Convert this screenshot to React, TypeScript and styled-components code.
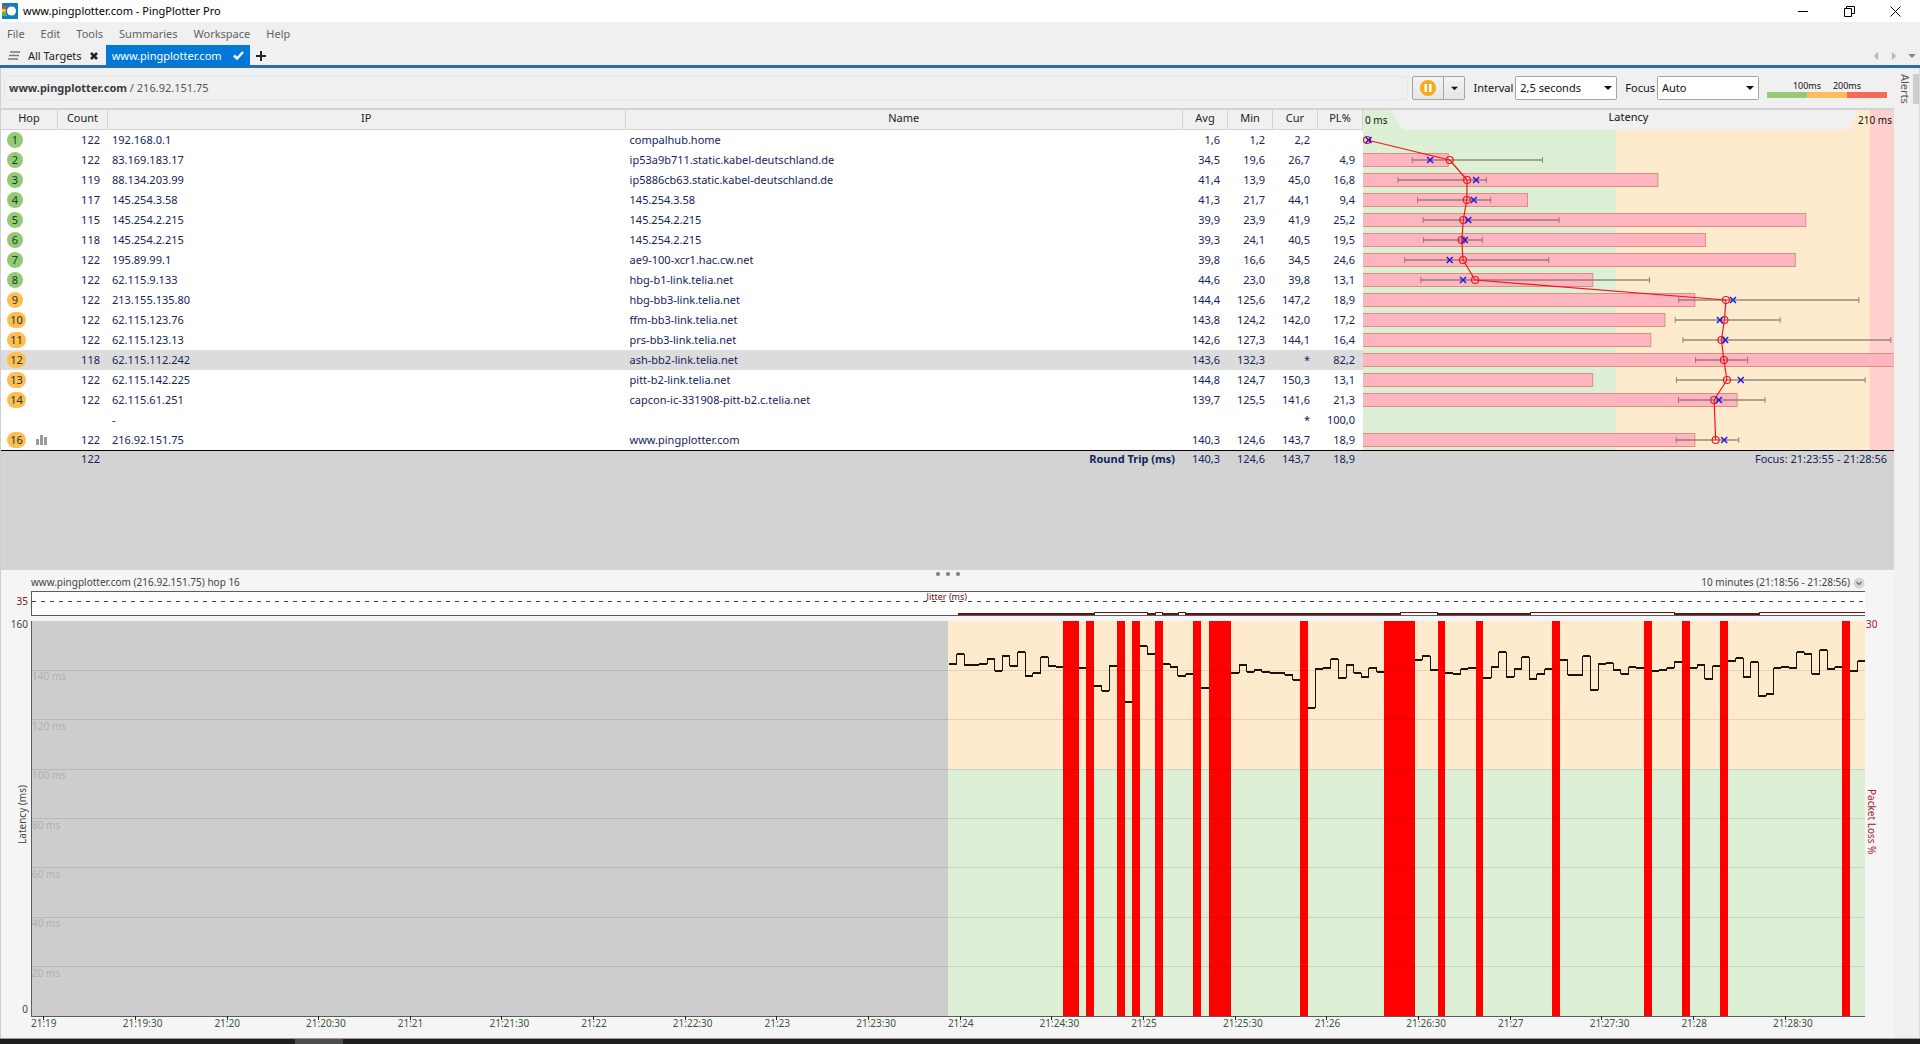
import React from "react";
import styled, { createGlobalStyle } from "styled-components";

const FONT = '"Noto Sans", "Open Sans", sans-serif';
const NAVY = "#14245c";

const Global = createGlobalStyle`
  *, *::before, *::after { box-sizing: border-box; }
  body { margin: 0; font: 11px/16px ${FONT}; color: #111; background: #f0f0f0; }
  button, select, input { font: inherit; color: inherit; }
  button { border: 0; padding: 0; background: none; }
`;

/* ---------- data ---------- */

type Hop = {
  n?: number;
  count?: number;
  ip: string;
  name?: string;
  avg?: string;
  min?: string;
  cur?: string;
  pl?: string;
  max?: number;
  final?: boolean;
};

const hops: Hop[] = [
  { n: 1, count: 122, ip: "192.168.0.1", name: "compalhub.home", avg: "1,6", min: "1,2", cur: "2,2", max: 3 },
  { n: 2, count: 122, ip: "83.169.183.17", name: "ip53a9b711.static.kabel-deutschland.de", avg: "34,5", min: "19,6", cur: "26,7", pl: "4,9", max: 71.4 },
  { n: 3, count: 119, ip: "88.134.203.99", name: "ip5886cb63.static.kabel-deutschland.de", avg: "41,4", min: "13,9", cur: "45,0", pl: "16,8", max: 49.1 },
  { n: 4, count: 117, ip: "145.254.3.58", name: "145.254.3.58", avg: "41,3", min: "21,7", cur: "44,1", pl: "9,4", max: 50.8 },
  { n: 5, count: 115, ip: "145.254.2.215", name: "145.254.2.215", avg: "39,9", min: "23,9", cur: "41,9", pl: "25,2", max: 78 },
  { n: 6, count: 118, ip: "145.254.2.215", name: "145.254.2.215", avg: "39,3", min: "24,1", cur: "40,5", pl: "19,5", max: 47.5 },
  { n: 7, count: 122, ip: "195.89.99.1", name: "ae9-100-xcr1.hac.cw.net", avg: "39,8", min: "16,6", cur: "34,5", pl: "24,6", max: 73.9 },
  { n: 8, count: 122, ip: "62.115.9.133", name: "hbg-b1-link.telia.net", avg: "44,6", min: "23,0", cur: "39,8", pl: "13,1", max: 114 },
  { n: 9, count: 122, ip: "213.155.135.80", name: "hbg-bb3-link.telia.net", avg: "144,4", min: "125,6", cur: "147,2", pl: "18,9", max: 197.3 },
  { n: 10, count: 122, ip: "62.115.123.76", name: "ffm-bb3-link.telia.net", avg: "143,8", min: "124,2", cur: "142,0", pl: "17,2", max: 166 },
  { n: 11, count: 122, ip: "62.115.123.13", name: "prs-bb3-link.telia.net", avg: "142,6", min: "127,3", cur: "144,1", pl: "16,4", max: 210 },
  { n: 12, count: 118, ip: "62.115.112.242", name: "ash-bb2-link.telia.net", avg: "143,6", min: "132,3", cur: "*", pl: "82,2", max: 153 },
  { n: 13, count: 122, ip: "62.115.142.225", name: "pitt-b2-link.telia.net", avg: "144,8", min: "124,7", cur: "150,3", pl: "13,1", max: 199.8 },
  { n: 14, count: 122, ip: "62.115.61.251", name: "capcon-ic-331908-pitt-b2.c.telia.net", avg: "139,7", min: "125,5", cur: "141,6", pl: "21,3", max: 160 },
  { ip: "-", cur: "*", pl: "100,0" },
  { n: 16, count: 122, ip: "216.92.151.75", name: "www.pingplotter.com", avg: "140,3", min: "124,6", cur: "143,7", pl: "18,9", max: 149.5, final: true },
];

// One sample every 2.5 s; null is a lost packet.
const samples: (number | null)[] = [
  142.6, 146.6, 142.2, 142.2, 142.6, 144.6, 139.8, 145.8, 141.8, 147.4,
  137.7, 138.9, 145.4, 141.8, 141.4, null, null, 141, null, 133.7,
  131.7, 141.8, null, 127.2, null, 149.7, 146.6, null, 142.6, 141.4,
  137.7, 138.5, null, 132.9, null, null, null, 138.9, 142.2, 139.4,
  140.2, 139.4, 138.9, 138.9, 138.1, 136.1, null, 124.8, 140.6, 141,
  144.6, 136.9, 142.2, 138.9, 137.3, 141, 139.4, null, null, null,
  null, 144.2, 145.8, 140.2, null, 138.9, 138.5, 140.6, 141, null,
  136.9, 141.4, 147.4, 137.3, 140.6, 145.4, 136.5, 138.5, 140.6, null,
  144.2, 138.1, 138.1, 145.8, 132.1, 142.6, 143, 140.2, 138.5, 141.4,
  141, null, 139.8, 140.2, 141, 143.4, null, 141, 142.2, 136.5,
  141.9, null, 143.8, 145.2, 137.3, 143.4, 129.5, 130.4, 141, 141.4,
  141, 147.4, 146.8, 138.5, 148.3, 140.6, 141.4, null, 139.8, 143.8,
];

// Stretches of the jitter trace, in percent of the time line.
const jitter: [number, number, boolean][] = [
  [50.5, 57.95, false],
  [57.95, 60.85, true],
  [60.85, 61.3, false],
  [61.3, 61.7, true],
  [61.7, 62.55, false],
  [62.55, 62.95, true],
  [62.95, 74.65, false],
  [74.65, 76.7, true],
  [76.7, 81.75, false],
  [81.75, 89.6, true],
  [89.6, 94.25, false],
  [94.25, 100, true],
];

const times = Array.from({ length: 20 }, (_, i) => {
  const minute = 19 + Math.floor(i / 2);
  return `21:${minute}${i % 2 ? ":30" : ""}`;
});

const num = (s?: string) => (s && s !== "*" ? parseFloat(s.replace(",", ".")) : null);
const pct = (v: number) => `${v.toFixed(3)}%`;

/* ---------- window frame ---------- */

const Window = styled.div`
  display: flex;
  flex-direction: column;
  min-height: 100vh;
`;

const TitleBar = styled.header`
  display: flex;
  align-items: center;
  height: 22px;
  padding: 0 2px;
  background: #fff;
  color: #000;
`;

const Title = styled.h1`
  flex: 1;
  margin: 0 0 0 5px;
  font-size: 11px;
  font-weight: 400;
`;

const WindowButton = styled.button`
  display: grid;
  place-items: center;
  width: 46px;
  height: 20px;
`;

const MenuBar = styled.nav`
  display: flex;
  align-items: center;
  gap: 16px;
  height: 23px;
  padding: 0 7px;
  color: #626262;
`;

const TabStrip = styled.div`
  display: flex;
  align-items: stretch;
  height: 23px;
  border-bottom: 2px solid #2a6da6;
  box-shadow: inset 0 -1px #2a6da6;
  padding-right: 4px;
`;

const Tab = styled.button<{ $active?: boolean }>`
  display: flex;
  align-items: center;
  justify-content: space-between;
  gap: 8px;
  min-width: ${(p) => (p.$active ? "144px" : "0")};
  padding: ${(p) => (p.$active ? "0 6px" : "0 8px")};
  color: ${(p) => (p.$active ? "#fff" : "#222")};
  background: ${(p) => (p.$active ? "#0078d7" : "transparent")};
`;

const AddTab = styled.button`
  display: grid;
  place-items: center;
  width: 22px;
`;

const TabNav = styled.div`
  display: flex;
  align-items: center;
  gap: 10px;
  margin-left: auto;
`;

const Body = styled.div`
  display: flex;
  flex: 1;
`;

const Main = styled.main`
  display: flex;
  flex-direction: column;
  flex: 1;
  min-width: 0;
  border-left: 1px solid #cfcfcf;
`;

const AlertsRail = styled.aside`
  display: flex;
  align-items: flex-start;
  justify-content: space-between;
  flex: 0 0 26px;
  padding: 6px 0 0 4px;
  border-right: 1px solid #dcdcdc;
`;

const AlertsTab = styled.button`
  writing-mode: vertical-rl;
  color: #555;
  line-height: 14px;
`;

const RailThumb = styled.div`
  width: 6px;
  height: 30px;
  background: #cdcdcd;
`;

const Taskbar = styled.footer`
  height: 6px;
  border-top: 1px solid #9a9a9a;
  background: #211f1e;
  padding-left: 295px;
`;

const TaskbarItem = styled.div`
  width: 48px;
  height: 5px;
  background: #504e4c;
`;

/* ---------- target bar ---------- */

const TargetBar = styled.section`
  display: flex;
  align-items: center;
  height: 42px;
  padding: 1px 7px 1px 3px;
  border-bottom: 2px solid #d2d2d2;
`;

const TargetName = styled.div`
  flex: 1;
  height: 24px;
  margin-right: 4px;
  padding: 3px 4px;
  border: 1px solid #e3e8ec;
  color: #555;
  strong { color: #3c3c3c; }
`;

const SplitButton = styled.div`
  display: flex;
  height: 24px;
  border: 1px solid #a3a7ab;
  border-radius: 2px;
  background: linear-gradient(#f3f3f3, #e6e6e6);
  margin-right: 8px;
`;

const SplitPart = styled.button<{ $width: number }>`
  display: grid;
  place-items: center;
  width: ${(p) => p.$width}px;
  & + & { border-left: 1px solid #a3a7ab; }
`;

const Field = styled.label`
  display: flex;
  align-items: center;
  gap: 2px;
  margin-right: 8px;
`;

const SelectBox = styled.span`
  display: grid;
  align-items: center;
  width: 102px;
  height: 24px;
  border: 1px solid #a3a7ab;
  border-radius: 2px;
  background: #fff;
  select {
    grid-area: 1 / 1;
    appearance: none;
    height: 22px;
    padding: 0 20px 0 4px;
    border: 0;
    background: none;
    outline: none;
  }
  svg {
    grid-area: 1 / 1;
    justify-self: end;
    margin-right: 4px;
    pointer-events: none;
  }
`;

const Scale = styled.div`
  width: 120px;
`;

const ScaleLabels = styled.div`
  display: grid;
  grid-template-columns: 40px 40px;
  justify-content: center;
  justify-items: center;
  font-size: 9px;
  line-height: 13px;
`;

const ScaleBar = styled.div`
  display: grid;
  grid-template-columns: 1fr 1fr 1fr;
  height: 6px;
`;

const ScalePart = styled.span<{ $color: string }>`
  background: ${(p) => p.$color};
`;

/* ---------- hop table ---------- */

const TracePane = styled.section`
  display: grid;
  grid-template-columns: 1362fr 531fr;
  align-items: start;
  padding-bottom: 99px;
  background: #d3d3d3;
`;

const HopTable = styled.table`
  width: 100%;
  table-layout: fixed;
  border-collapse: separate;
  border-spacing: 0;
  background: #fff;
  color: ${NAVY};
`;

const HeadCell = styled.th`
  height: 20px;
  padding: 0 0 3px;
  border-right: 1px solid #d3d3d3;
  border-bottom: 1px solid #d3d3d3;
  background: #f0f0f0;
  color: #222;
  font-weight: 400;
  line-height: 16px;
`;

const Row = styled.tr<{ $selected?: boolean }>`
  background: ${(p) => (p.$selected ? "#dcdcdc" : "#fff")};
`;

const Cell = styled.td<{ $left?: boolean }>`
  height: 20px;
  padding: ${(p) => (p.$left ? "0 4px" : "0 8px")};
  text-align: ${(p) => (p.$left ? "left" : "right")};
  line-height: 16px;
  white-space: nowrap;
`;

const FootCell = styled(Cell)`
  height: 21px;
  border-top: 1px solid #000;
  background: #d3d3d3;
  padding-bottom: 4px;
`;

const HopCell = styled.div`
  display: flex;
  align-items: center;
  gap: 10px;
  padding-left: 2px;
`;

const Badge = styled.span<{ $color: string; $wide: boolean }>`
  width: ${(p) => (p.$wide ? 19 : 16)}px;
  height: 16px;
  border-radius: 8px;
  background: ${(p) => p.$color};
  color: #23343c;
  text-align: center;
  line-height: 15px;
`;

const LatencyPane = styled.div`
  background: linear-gradient(90deg, #ddefd5 0 47.6%, #feebcd 47.6% 95.4%, #ffd0cd 95.4%);
`;

const LatencyHead = styled.div`
  position: relative;
  display: grid;
  grid-template-columns: 1fr auto 1fr;
  height: 20px;
  padding: 1px 2px 0;
  font-size: 10px;
  line-height: 18px;
  &::before {
    content: "";
    position: absolute;
    inset: 0;
    background: #f0f0f0;
    clip-path: polygon(28px 0, calc(100% - 34px) 0, calc(100% - 47px) 100%, 40px 100%);
  }
  span { position: relative; }
  span:last-child { text-align: right; }
`;

const LatencyTitle = styled.span`
  font-size: 11px;
  line-height: 12px;
`;

const Plot = styled.svg<{ $height?: number }>`
  display: block;
  width: 100%;
  height: ${(p) => (p.$height ? `${p.$height}px` : "100%")};
`;

const FocusRange = styled.div`
  height: 21px;
  border-top: 1px solid #000;
  background: #d3d3d3;
  padding: 0 7px;
  color: ${NAVY};
  text-align: right;
`;

/* ---------- time graph ---------- */

const TimePane = styled.section`
  display: grid;
  grid-template-columns: 30px 1fr 29px;
  grid-template-rows: 21px 25px 5px minmax(200px, 1fr) 21px;
  flex: 1;
  background: #f5f5f5;
  color: #444;
  font-size: 10px;
`;

const GraphHead = styled.div`
  grid-column: 2;
  display: grid;
  grid-template-columns: 1fr auto 1fr;
  padding-top: 2px;
  line-height: 21px;
`;

const Grip = styled.div`
  display: flex;
  gap: 6px;
  i {
    width: 4px;
    height: 4px;
    border-radius: 2px;
    background: #7c7c7c;
  }
`;

const RangePicker = styled.button`
  display: flex;
  align-items: center;
  justify-content: flex-end;
  gap: 3px;
  line-height: 21px;
`;

const JitterBox = styled.div`
  position: relative;
  grid-area: 2 / 2;
  border: solid #5c5c5c;
  border-width: 1px 0 1px 1px;
  background: #fdfdfd;
`;

const JitterTitle = styled.span`
  position: absolute;
  top: 0;
  left: 50%;
  margin-left: -22px;
  color: #6b1218;
  font-size: 9px;
  line-height: 10px;
`;

const LatencyBox = styled.div`
  position: relative;
  grid-area: 4 / 2;
  border-left: 1px solid #5c5c5c;
  border-bottom: 1px solid #5c5c5c;
  background:
    linear-gradient(90deg, #cdcdcd 49.95%, transparent 49.95%),
    linear-gradient(#feebcd 37.5%, #ddefd5 37.5%);
`;

const GridLabel = styled.span`
  position: absolute;
  left: 0;
  color: #b0b0b0;
  line-height: 12px;
`;

const AxisSide = styled.div<{ $right?: boolean; $color?: string; $row: number }>`
  grid-area: ${(p) => p.$row} / ${(p) => (p.$right ? 3 : 1)};
  display: flex;
  flex-direction: column;
  justify-content: space-between;
  align-items: ${(p) => (p.$right ? "flex-start" : "flex-end")};
  padding: ${(p) => (p.$right ? "0 1px" : "0 3px")};
  color: ${(p) => p.$color ?? "inherit"};
`;

const JitterSide = styled(AxisSide)`
  line-height: 21px;
`;

const AxisNumber = styled.span`
  line-height: 6px;
  &:last-child { line-height: 16px; }
`;

const VerticalText = styled.span<{ $flip?: boolean }>`
  writing-mode: vertical-rl;
  transform: ${(p) => (p.$flip ? "rotate(180deg)" : "none")};
  line-height: 12px;
`;

const TimeAxis = styled.div`
  grid-area: 5 / 2;
  display: flex;
  color: #355a35;
  line-height: 13px;
  span { flex: 0 0 5%; white-space: nowrap; }
`;

/* ---------- drawings ---------- */

const Caret = ({ dir = "down", color = "#111", w = 8 }: { dir?: "down" | "left" | "right"; color?: string; w?: number }) => {
  const d = { down: "M0 2h8L4 6z", left: "M6 0v8L2 4z", right: "M2 0v8l4-4z" }[dir];
  return (
    <svg width={w} height={w} viewBox="0 0 8 8" aria-hidden="true">
      <path d={d} fill={color} />
    </svg>
  );
};

const AppIcon = () => (
  <svg width="16" height="16" viewBox="0 0 16 16" aria-hidden="true">
    <rect width="16" height="16" rx="1" fill="#0b7fc4" />
    <path d="M0 3h5v4H0z" fill="#e0473a" />
    <path d="M0 6h5v3H0z" fill="#f7c23c" />
    <path d="M0 9h5v4H0z" fill="#62b246" />
    <circle cx="9.500" cy="8" r="6" fill="#0b7fc4" />
    <circle cx="9.500" cy="8" r="4.600" fill="#fff" />
  </svg>
);

const LatencyGraph = () => {
  // The data scale ends slightly short of the pane's right edge.
  const x = (ms: number) => (ms / 210) * 99.4;
  const points = hops
    .map((h, i) => ({ avg: num(h.avg), y: i * 20 + 10 }))
    .filter((p): p is { avg: number; y: number } => p.avg !== null);
  return (
    <Plot $height={320} role="img" aria-label="Latency per hop">
      {hops.map((h, i) => {
        const y = i * 20 + 10;
        const loss = num(h.pl);
        const min = num(h.min);
        const showBar = loss !== null && h.n;
        return (
          <g key={i}>
            {showBar && (
              <rect x="-1" y={y - 6.5} width={pct(Math.min(110, (loss / 30) * 99.5))} height="13" fill="#ffb5c0" stroke="#d9907f" />
            )}
            {min !== null && h.max && h.max > 5 && (
              <g stroke="#7d7068" strokeOpacity="0.800">
                <line x1={pct(x(min))} x2={pct(x(h.max))} y1={y} y2={y} strokeWidth="1.500" />
                <line x1={pct(x(min))} x2={pct(x(min))} y1={y - 3} y2={y + 3} />
                <line x1={pct(x(h.max))} x2={pct(x(h.max))} y1={y - 3} y2={y + 3} />
              </g>
            )}
          </g>
        );
      })}
      {points.slice(1).map((p, i) => (
        <line key={i} x1={pct(x(points[i].avg))} y1={points[i].y} x2={pct(x(p.avg))} y2={p.y} stroke="#f5141c" strokeWidth="1.200" />
      ))}
      {points.map((p, i) => (
        <circle key={i} cx={pct(x(p.avg))} cy={p.y} r="3.500" fill="none" stroke="#f5141c" strokeWidth="1.200" />
      ))}
      {hops.map((h, i) => {
        const cur = num(h.cur);
        return cur === null ? null : (
          <svg key={i} x={pct(x(cur))} y={i * 20 + 10} overflow="visible">
            <path d="M-3-3 3 3M3-3-3 3" stroke="#1a1ae6" strokeWidth="1.500" />
          </svg>
        );
      })}
    </Plot>
  );
};

const TimeGraph = () => {
  const start = 50.02;
  const step = 2.5 / 6;
  const x = (i: number) => pct(start + i * step);
  const y = (ms: number) => pct(((160 - ms) / 160) * 100);
  return (
    <Plot role="img" aria-label="Latency over time" overflow="visible" shapeRendering="crispEdges">
      {samples.map((s, i) =>
        s === null ? <rect key={i} x={x(i)} y="0" width={pct(step)} height="100%" fill="#ff0000" /> : null
      )}
      {[140, 120, 100, 80, 60, 40, 20].map((ms) => (
        <line key={ms} x1="0" x2="100%" y1={y(ms)} y2={y(ms)} stroke="#000" strokeOpacity="0.100" />
      ))}
      {samples.map((s, i) => {
        if (s === null) return null;
        const prev = samples[i - 1];
        const end = i === samples.length - 1 ? "100%" : x(i + 1);
        return (
          <g key={i} stroke="#1c1408">
            <line x1={x(i)} x2={end} y1={y(s)} y2={y(s)} strokeWidth="2" />
            {prev != null && <line x1={x(i)} x2={x(i)} y1={y(prev)} y2={y(s)} />}
          </g>
        );
      })}
      {times.map((t, i) => (
        <svg key={t} x={pct(0.64 + i * 5)} y="100%" overflow="visible">
          <line y1="0" y2="4" stroke="#222" />
        </svg>
      ))}
    </Plot>
  );
};

/* ---------- page ---------- */

export default function App() {
  return (
    <>
      <Global />
      <Window>
        <TitleBar>
          <AppIcon />
          <Title>www.pingplotter.com - PingPlotter Pro</Title>
          <WindowButton aria-label="Minimize">
            <svg width="11" height="11"><path d="M0 5.500h10" stroke="#000" /></svg>
          </WindowButton>
          <WindowButton aria-label="Restore">
            <svg width="11" height="11" fill="none" stroke="#000">
              <path d="M.5 2.500h7v8h-7zM2.500 2.500v-2h8v7h-3" />
            </svg>
          </WindowButton>
          <WindowButton aria-label="Close">
            <svg width="11" height="11"><path d="M.5.5l10 10M10.500.5l-10 10" stroke="#000" /></svg>
          </WindowButton>
        </TitleBar>
        <MenuBar>
          {["File", "Edit", "Tools", "Summaries", "Workspace", "Help"].map((m) => (
            <button key={m}>{m}</button>
          ))}
        </MenuBar>
        <TabStrip>
          <Tab>
            <svg width="12" height="9" stroke="#777" strokeWidth="1.500" aria-hidden="true">
              <path d="M2 1h10M1 4.500h10M0 8h10" />
            </svg>
            All Targets
            <svg width="8" height="8" stroke="#222" strokeWidth="2.500" aria-hidden="true">
              <path d="M1 1l6 6M7 1L1 7" />
            </svg>
          </Tab>
          <Tab $active>
            www.pingplotter.com
            <svg width="11" height="9" fill="none" stroke="#fff" strokeWidth="2.500" aria-hidden="true">
              <path d="M1 4.500l3 3L10 1" />
            </svg>
          </Tab>
          <AddTab aria-label="New tab">
            <svg width="10" height="10" stroke="#222" strokeWidth="2"><path d="M5 0v10M0 5h10" /></svg>
          </AddTab>
          <TabNav>
            <button aria-label="Previous tab"><Caret dir="left" color="#b5b5b5" /></button>
            <button aria-label="Next tab"><Caret dir="right" color="#b5b5b5" /></button>
            <button aria-label="Tab list"><Caret color="#8a8a8a" /></button>
          </TabNav>
        </TabStrip>
        <Body>
          <Main>
            <TargetBar>
              <TargetName><strong>www.pingplotter.com</strong> / 216.92.151.75</TargetName>
              <SplitButton>
                <SplitPart $width={30} aria-label="Pause">
                  <svg width="16" height="16">
                    <circle cx="8" cy="8" r="8" fill="#fba81c" />
                    <path d="M4.500 4h2.500v8h-2.500zM9 4h2.500v8h-2.500z" fill="#fff" />
                  </svg>
                </SplitPart>
                <SplitPart $width={21} aria-label="More actions"><Caret w={7} /></SplitPart>
              </SplitButton>
              <Field>
                Interval
                <SelectBox>
                  <select defaultValue="2,5 seconds"><option>2,5 seconds</option></select>
                  <Caret />
                </SelectBox>
              </Field>
              <Field>
                Focus
                <SelectBox>
                  <select defaultValue="Auto"><option>Auto</option></select>
                  <Caret />
                </SelectBox>
              </Field>
              <Scale>
                <ScaleLabels><span>100ms</span><span>200ms</span></ScaleLabels>
                <ScaleBar>
                  <ScalePart $color="#96ca75" />
                  <ScalePart $color="#fdbd57" />
                  <ScalePart $color="#f66a55" />
                </ScaleBar>
              </Scale>
            </TargetBar>

            <TracePane>
              <HopTable>
                <colgroup>
                  <col style={{ width: 57 }} />
                  <col style={{ width: 50 }} />
                  <col style={{ width: "38%" }} />
                  <col />
                  <col style={{ width: 45 }} />
                  <col style={{ width: 45 }} />
                  <col style={{ width: 45 }} />
                  <col style={{ width: 45 }} />
                </colgroup>
                <thead>
                  <tr>
                    {["Hop", "Count", "IP", "Name", "Avg", "Min", "Cur", "PL%"].map((h) => (
                      <HeadCell key={h} scope="col">{h}</HeadCell>
                    ))}
                  </tr>
                </thead>
                <tbody>
                  {hops.map((h, i) => (
                    <Row key={i} $selected={h.n === 12}>
                      <Cell $left>
                        {h.n && (
                          <HopCell>
                            <Badge $color={h.n < 9 ? "#93cb73" : "#fdbf50"} $wide={h.n > 9}>{h.n}</Badge>
                            {h.final && (
                              <svg width="11" height="10" fill="#9a9a9a" aria-hidden="true">
                                <path d="M0 4h3v6H0zM4 0h3v10H4zM8 2h3v8H8z" />
                              </svg>
                            )}
                          </HopCell>
                        )}
                      </Cell>
                      <Cell>{h.count}</Cell>
                      <Cell $left>{h.ip}</Cell>
                      <Cell $left>{h.name}</Cell>
                      <Cell>{h.avg}</Cell>
                      <Cell>{h.min}</Cell>
                      <Cell>{h.cur}</Cell>
                      <Cell>{h.pl}</Cell>
                    </Row>
                  ))}
                </tbody>
                <tfoot>
                  <tr>
                    <FootCell />
                    <FootCell>122</FootCell>
                    <FootCell />
                    <FootCell><strong>Round Trip (ms)</strong></FootCell>
                    <FootCell>140,3</FootCell>
                    <FootCell>124,6</FootCell>
                    <FootCell>143,7</FootCell>
                    <FootCell>18,9</FootCell>
                  </tr>
                </tfoot>
              </HopTable>
              <LatencyPane>
                <LatencyHead>
                  <span>0 ms</span>
                  <LatencyTitle>Latency</LatencyTitle>
                  <span>210 ms</span>
                </LatencyHead>
                <LatencyGraph />
                <FocusRange>Focus: 21:23:55 - 21:28:56</FocusRange>
              </LatencyPane>
            </TracePane>

            <TimePane>
              <GraphHead>
                <span>www.pingplotter.com (216.92.151.75) hop 16</span>
                <Grip><i /><i /><i /></Grip>
                <RangePicker>
                  10 minutes (21:18:56 - 21:28:56)
                  <svg width="12" height="12" aria-hidden="true">
                    <circle cx="6" cy="6" r="5.500" fill="#d6d6d6" />
                    <path d="M3.500 5L6 7.500 8.500 5" fill="none" stroke="#777" strokeWidth="1.500" />
                  </svg>
                </RangePicker>
              </GraphHead>

              <JitterSide $row={2} $color="#7a1a22">35</JitterSide>
              <JitterBox>
                <Plot role="img" aria-label="Jitter" shapeRendering="crispEdges">
                  <line x1="0" x2="100%" y1="9.500" y2="9.500" stroke="#444" strokeDasharray="4 5" />
                  {jitter.map(([a, b, high], i) => (
                    <g key={i} stroke="#5e1518">
                      <line x1={pct(a)} x2={pct(b)} y1={high ? 20.5 : 22} y2={high ? 20.5 : 22} strokeWidth={high ? 1 : 2} />
                      {i > 0 && <line x1={pct(a)} x2={pct(a)} y1="20" y2="23" />}
                    </g>
                  ))}
                </Plot>
                <JitterTitle>Jitter (ms)</JitterTitle>
              </JitterBox>

              <AxisSide $row={4}>
                <AxisNumber>160</AxisNumber>
                <VerticalText $flip>Latency (ms)</VerticalText>
                <AxisNumber>0</AxisNumber>
              </AxisSide>
              <LatencyBox>
                <TimeGraph />
                {[140, 120, 100, 80, 60, 40, 20].map((ms) => (
                  <GridLabel key={ms} style={{ top: pct(((160 - ms) / 160) * 100) }}>{ms} ms</GridLabel>
                ))}
              </LatencyBox>
              <AxisSide $row={4} $right $color="#a3202c">
                <AxisNumber>30</AxisNumber>
                <VerticalText>Packet Loss %</VerticalText>
                <span />
              </AxisSide>
              <TimeAxis>
                {times.map((t) => <span key={t}>{t}</span>)}
              </TimeAxis>
            </TimePane>
          </Main>
          <AlertsRail>
            <AlertsTab>Alerts</AlertsTab>
            <RailThumb />
          </AlertsRail>
        </Body>
        <Taskbar><TaskbarItem /></Taskbar>
      </Window>
    </>
  );
}
